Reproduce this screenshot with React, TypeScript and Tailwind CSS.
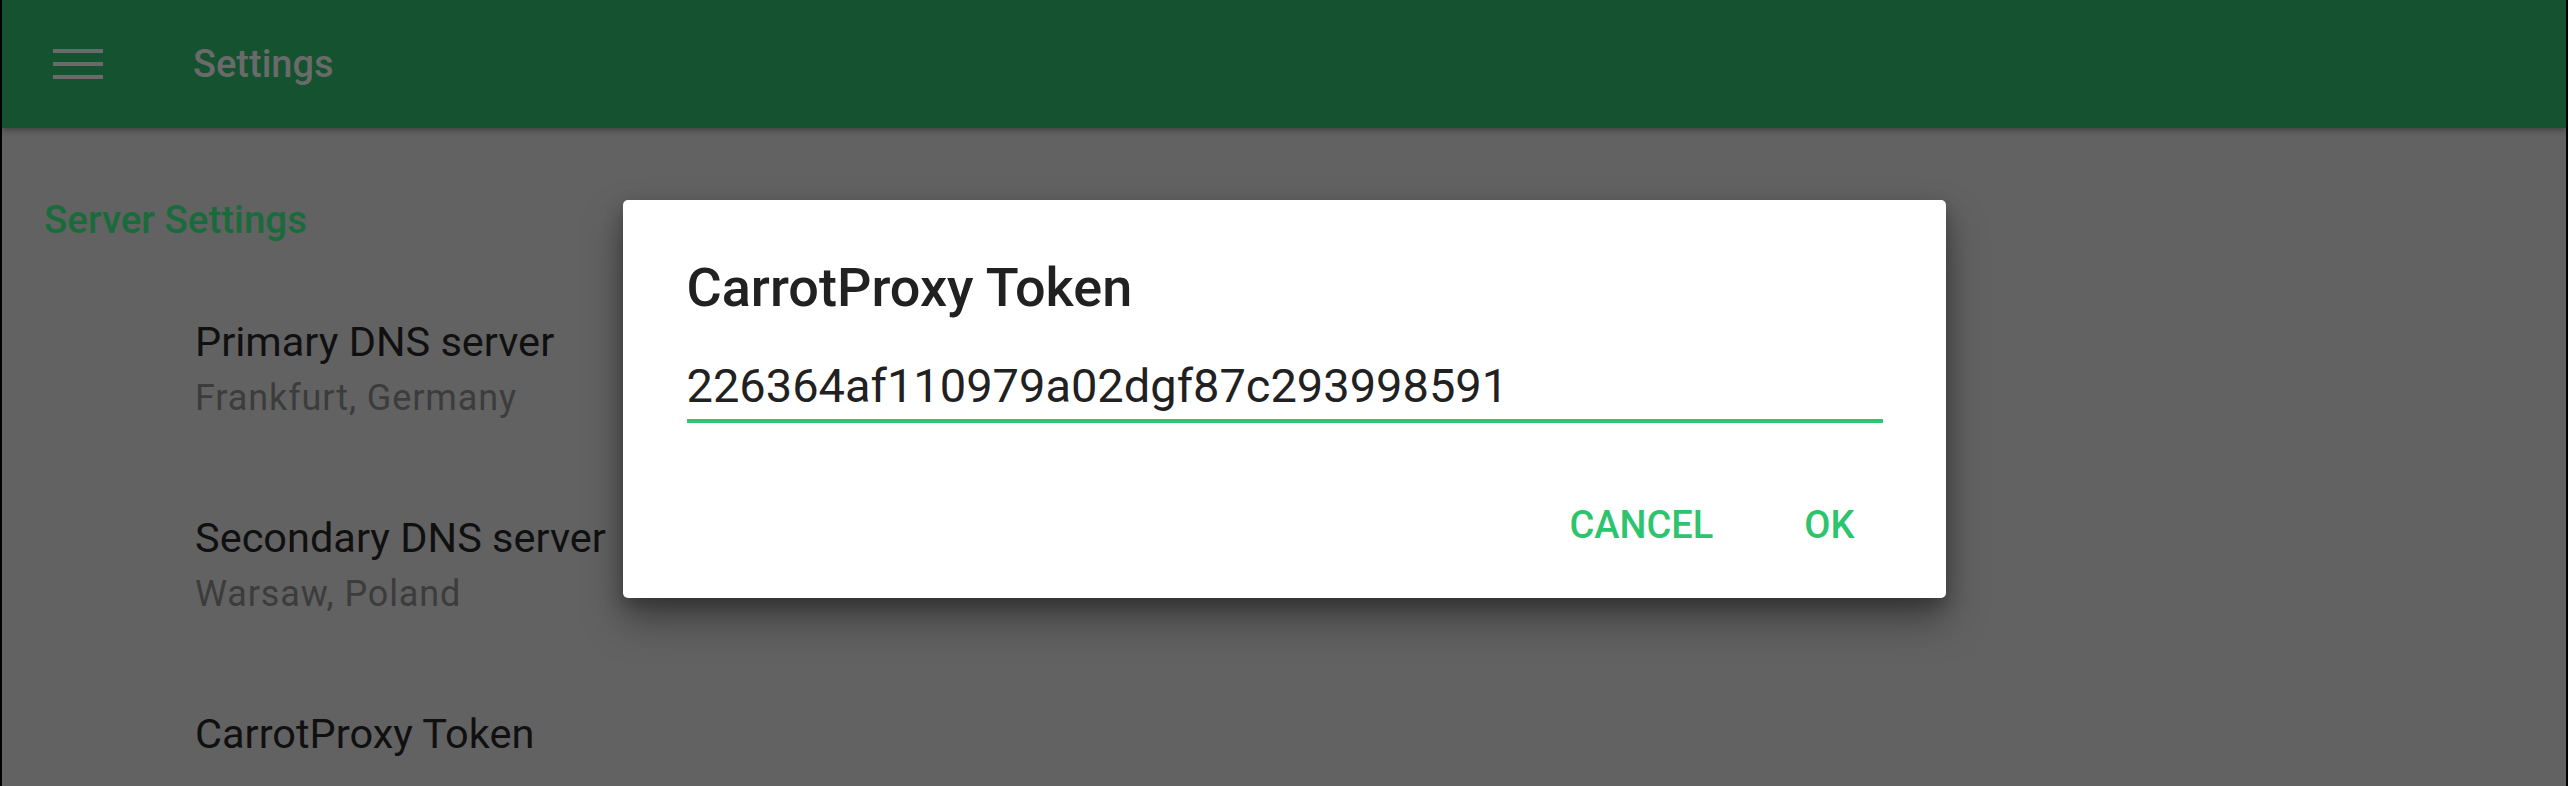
import React from 'react';

const rows = [
  { title: 'Primary DNS server', summary: 'Frankfurt, Germany' },
  { title: 'Secondary DNS server', summary: 'Warsaw, Poland' },
  { title: 'CarrotProxy Token', summary: '' },
];

function MenuIcon() {
  return (
    <svg width="50" height="30" viewBox="0 0 50 30" className="shrink-0">
      <rect x="0" y="0" width="50" height="4" fill="#6a6a6a" />
      <rect x="0" y="13" width="50" height="4" fill="#6a6a6a" />
      <rect x="0" y="26" width="50" height="4" fill="#6a6a6a" />
    </svg>
  );
}

export default function App() {
  return (
    <div className="relative h-[786px] w-full overflow-hidden border-x-2 border-black bg-[#626262] font-['Roboto',sans-serif]">
      {/* app bar */}
      <header className="relative z-10 flex h-[128px] items-center gap-[90px] bg-[#145230] pl-[51px] shadow-[0_2px_6px_rgba(0,0,0,0.35)]">
        <MenuIcon />
        <span className="text-[38px] font-medium text-[#6a6a6a]">Settings</span>
      </header>

      {/* settings list (dimmed behind the dialog) */}
      <div className="pt-[70px]">
        <div className="pl-[42px] text-[38.5px] leading-[44px] font-medium text-[#1a6b3b]">Server Settings</div>
        <div className="mt-[28px]">
          {rows.map((r) => (
            <div key={r.title} className="pt-[48px] pb-[47px] pl-[193px]">
              <div className="text-[41.5px] leading-[48px] text-[#101010]">{r.title}</div>
              {r.summary && (
                <div className="mt-[11px] text-[36px] leading-[42px] tracking-[0.025em] text-[#3c3c3c]">{r.summary}</div>
              )}
            </div>
          ))}
        </div>
      </div>

      {/* dialog */}
      <div className="absolute inset-0 z-20 flex items-start justify-center pt-[200px]">
        <div className="w-[1323px] rounded-[5px] bg-white pt-[58px] pb-[49px] pl-[64px] pr-[63px] shadow-[0_22px_40px_rgba(0,0,0,0.35),0_8px_18px_rgba(0,0,0,0.25)]">
          <h2 className="text-[54px] leading-[60px] font-medium text-[#212121]">CarrotProxy Token</h2>
          <div className="mt-[40px] border-b-4 border-[#31c572] pb-[5px] text-[47px] leading-[56px] text-[#212121]">
            226364af110979a02dgf87c293998591
          </div>
          <div className="mt-[78px] flex justify-end gap-[91px] pr-[28px] text-[38px] leading-[48px] font-medium text-[#2dc46e]">
            <button>CANCEL</button>
            <button>OK</button>
          </div>
        </div>
      </div>
    </div>
  );
}
